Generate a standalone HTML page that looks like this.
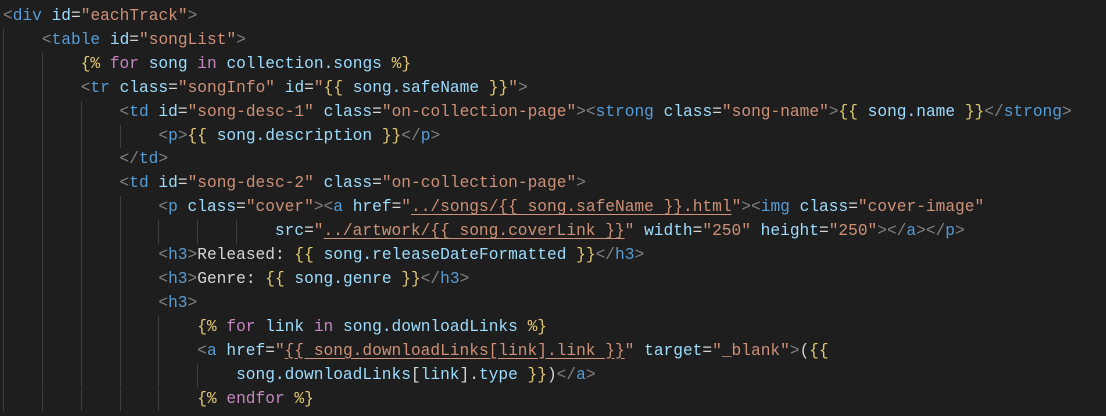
<!DOCTYPE html>
<html><head><meta charset="utf-8"><style>
html,body{margin:0;padding:0;background:#1e1e1e;width:1106px;height:416px;overflow:hidden}
.c{position:absolute;left:3px;top:5px;font-family:"Liberation Mono",monospace;font-size:16.2px;line-height:23.9px;white-space:pre;color:#d4d4d4}
i{display:inline-block;width:4ch;box-shadow:inset 1px 0 #404040;font-style:normal;height:23.9px;vertical-align:top}
.g{color:#808080}.t{color:#569cd6}.a{color:#9cdcfe}.s{color:#ce9178}.b{color:#e2c871}.k{color:#c586c0}.v{color:#9cdcfe}
.u{text-decoration:underline;text-decoration-color:#ce9178;text-underline-offset:3px}
</style></head><body><div class="c"><div><span class="g">&lt;</span><span class="t">div</span> <span class="a">id</span>=<span class="s">"eachTrack"</span><span class="g">&gt;</span></div><div><i></i><span class="g">&lt;</span><span class="t">table</span> <span class="a">id</span>=<span class="s">"songList"</span><span class="g">&gt;</span></div><div><i></i><i></i><span class="b">{%</span> <span class="k">for</span> <span class="v">song</span> <span class="k">in</span> <span class="v">collection.songs</span> <span class="b">%}</span></div><div><i></i><i></i><span class="g">&lt;</span><span class="t">tr</span> <span class="a">class</span>=<span class="s">"songInfo"</span> <span class="a">id</span>=<span class="s">"<span class="b">{{</span> <span class="v">song.safeName</span> <span class="b">}}</span>"</span><span class="g">&gt;</span></div><div><i></i><i></i><i></i><span class="g">&lt;</span><span class="t">td</span> <span class="a">id</span>=<span class="s">"song-desc-1"</span> <span class="a">class</span>=<span class="s">"on-collection-page"</span><span class="g">&gt;&lt;</span><span class="t">strong</span> <span class="a">class</span>=<span class="s">"song-name"</span><span class="g">&gt;</span><span class="b">{{</span> <span class="v">song.name</span> <span class="b">}}</span><span class="g">&lt;/</span><span class="t">strong</span><span class="g">&gt;</span></div><div><i></i><i></i><i></i><i></i><span class="g">&lt;</span><span class="t">p</span><span class="g">&gt;</span><span class="b">{{</span> <span class="v">song.description</span> <span class="b">}}</span><span class="g">&lt;/</span><span class="t">p</span><span class="g">&gt;</span></div><div><i></i><i></i><i></i><span class="g">&lt;/</span><span class="t">td</span><span class="g">&gt;</span></div><div><i></i><i></i><i></i><span class="g">&lt;</span><span class="t">td</span> <span class="a">id</span>=<span class="s">"song-desc-2"</span> <span class="a">class</span>=<span class="s">"on-collection-page"</span><span class="g">&gt;</span></div><div><i></i><i></i><i></i><i></i><span class="g">&lt;</span><span class="t">p</span> <span class="a">class</span>=<span class="s">"cover"</span><span class="g">&gt;&lt;</span><span class="t">a</span> <span class="a">href</span>=<span class="s">"<span class="u">../songs/{{ song.safeName }}.html</span>"</span><span class="g">&gt;&lt;</span><span class="t">img</span> <span class="a">class</span>=<span class="s">"cover-image"</span></div><div><i></i><i></i><i></i><i></i><i></i><i></i><i></i><span class="a">src</span>=<span class="s">"<span class="u">../artwork/{{ song.coverLink }}</span>"</span> <span class="a">width</span>=<span class="s">"250"</span> <span class="a">height</span>=<span class="s">"250"</span><span class="g">&gt;&lt;/</span><span class="t">a</span><span class="g">&gt;&lt;/</span><span class="t">p</span><span class="g">&gt;</span></div><div><i></i><i></i><i></i><i></i><span class="g">&lt;</span><span class="t">h3</span><span class="g">&gt;</span>Released: <span class="b">{{</span> <span class="v">song.releaseDateFormatted</span> <span class="b">}}</span><span class="g">&lt;/</span><span class="t">h3</span><span class="g">&gt;</span></div><div><i></i><i></i><i></i><i></i><span class="g">&lt;</span><span class="t">h3</span><span class="g">&gt;</span>Genre: <span class="b">{{</span> <span class="v">song.genre</span> <span class="b">}}</span><span class="g">&lt;/</span><span class="t">h3</span><span class="g">&gt;</span></div><div><i></i><i></i><i></i><i></i><span class="g">&lt;</span><span class="t">h3</span><span class="g">&gt;</span></div><div><i></i><i></i><i></i><i></i><i></i><span class="b">{%</span> <span class="k">for</span> <span class="v">link</span> <span class="k">in</span> <span class="v">song.downloadLinks</span> <span class="b">%}</span></div><div><i></i><i></i><i></i><i></i><i></i><span class="g">&lt;</span><span class="t">a</span> <span class="a">href</span>=<span class="s">"<span class="u">{{ song.downloadLinks[link].link }}</span>"</span> <span class="a">target</span>=<span class="s">"_blank"</span><span class="g">&gt;</span>(<span class="b">{{</span></div><div><i></i><i></i><i></i><i></i><i></i><i></i><span class="v">song.downloadLinks</span>[<span class="v">link</span>].<span class="v">type</span> <span class="b">}}</span>)<span class="g">&lt;/</span><span class="t">a</span><span class="g">&gt;</span></div><div><i></i><i></i><i></i><i></i><i></i><span class="b">{%</span> <span class="k">endfor</span> <span class="b">%}</span></div></div></body></html>
